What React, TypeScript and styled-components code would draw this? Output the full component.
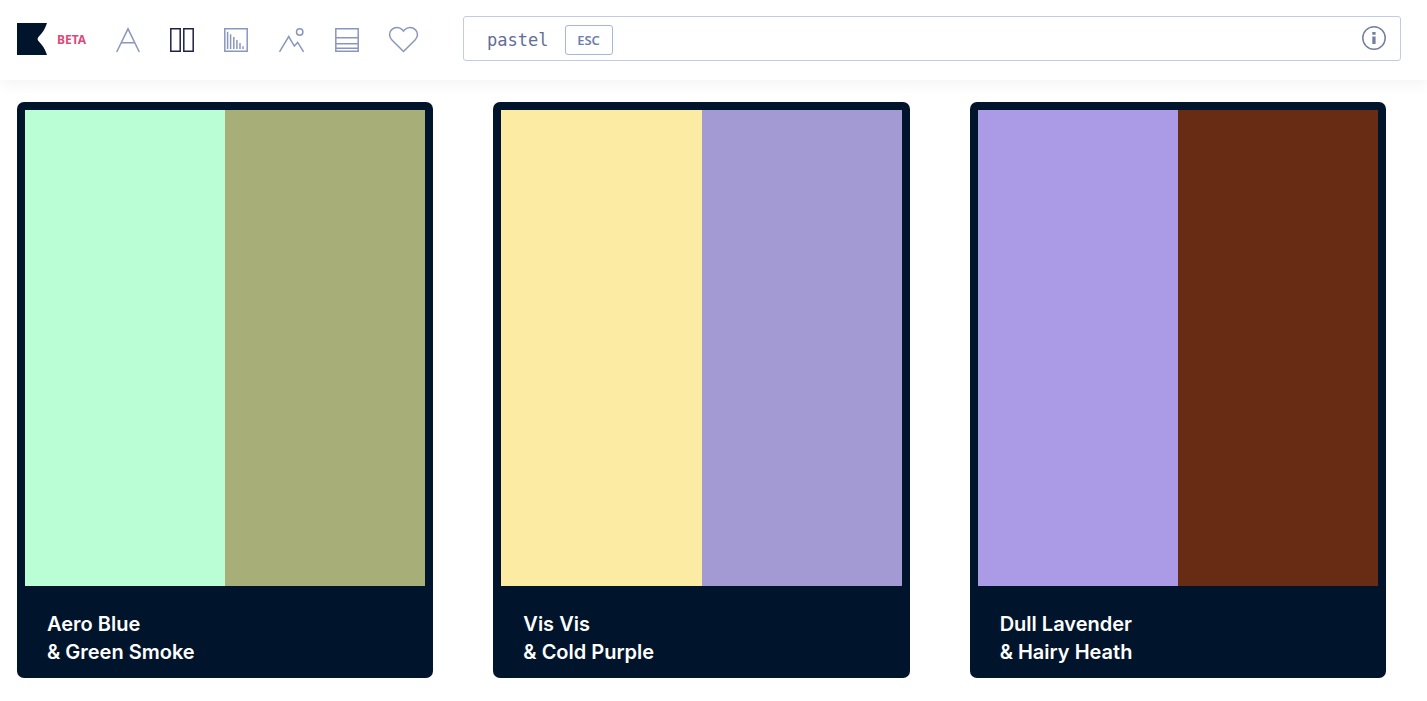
import React from "react";
import styled, { createGlobalStyle } from "styled-components";

const navy = "#00142b";
const slate = "#8a97bd";

const GlobalStyle = createGlobalStyle`
  *, *::before, *::after { box-sizing: border-box; }
  body {
    margin: 0;
    background: #fff;
    font-family: Inter, "Liberation Sans", sans-serif;
  }
`;

const Header = styled.header`
  position: sticky;
  top: 0;
  z-index: 1;
  display: flex;
  align-items: flex-start;
  gap: 44px;
  padding: 16px 26px 16px 17px;
  background: #fff;
  box-shadow: 0 4px 14px rgba(0, 0, 0, 0.05);
`;

const Brand = styled.a`
  display: flex;
  align-items: center;
  gap: 10px;
  color: #d94b7a;
  font: 700 12px/16px "Noto Sans", sans-serif;
  text-decoration: none;

  svg {
    display: block;
    margin-bottom: 2px;
  }
`;

const Nav = styled.nav`
  display: flex;
  align-items: center;
  gap: 30px;
  height: 48px;
`;

const NavButton = styled.button<{ $active?: boolean }>`
  display: flex;
  padding: 0;
  border: 0;
  background: none;
  color: ${(p) => (p.$active ? "#1d2342" : slate)};
  cursor: pointer;

  svg {
    display: block;
    fill: none;
    stroke: currentColor;
    stroke-width: 1.5;
  }
`;

const Search = styled.form`
  flex: 1;
  display: flex;
  align-items: center;
  height: 45px;
  padding: 3px 14px 0 23px;
  border: 1px solid #c3cbe2;
  border-radius: 3px;
`;

const Query = styled.input`
  field-sizing: content;
  min-width: 60px;
  margin-right: 16px;
  padding: 0;
  border: 0;
  outline: 0;
  background: none;
  color: #626d98;
  font: 17px/24px "DejaVu Sans Mono", monospace;
`;

const EscButton = styled.button`
  width: 48px;
  height: 30px;
  padding: 0;
  border: 1px solid #a5b6d8;
  border-radius: 3px;
  background: #fff;
  color: #6c80b0;
  font: 600 13px/16px "Noto Sans", sans-serif;
  cursor: pointer;
`;

const InfoButton = styled.button`
  display: flex;
  margin-left: auto;
  padding: 0 0 4px;
  border: 0;
  background: none;
  color: #75809f;
  cursor: pointer;
`;

const Grid = styled.main`
  display: grid;
  grid-template-columns: repeat(3, minmax(0, 1fr));
  gap: 60px;
  padding: 22px 41px 23px 17px;
`;

const Card = styled.a`
  display: block;
  padding: 8px 8px 12px;
  border-radius: 7px;
  background: ${navy};
  color: #fff;
  text-decoration: none;
`;

const Swatches = styled.div`
  display: flex;
  height: 476px;
`;

const Swatch = styled.div<{ $color: string }>`
  flex: 1;
  background: ${(p) => p.$color};
`;

const Title = styled.h2`
  margin: 0;
  padding: 24px 22px 0;
  font-size: 20px;
  font-weight: 600;
  line-height: 28px;
`;

const Line = styled.span`
  display: block;
`;

const pairs = [
  { names: ["Aero Blue", "Green Smoke"], colors: ["#b9fed5", "#a8ae77"] },
  { names: ["Vis Vis", "Cold Purple"], colors: ["#fceba2", "#a39ad3"] },
  { names: ["Dull Lavender", "Hairy Heath"], colors: ["#ab9be6", "#682b14"] },
];

const modes = [
  {
    label: "Type",
    width: 24,
    art: <path d="M.7 24 12 .8 23.3 24M5.3 14.8h13.4" />,
  },
  {
    label: "Poster",
    width: 24,
    active: true,
    art: <path d="M.8.8h9.4v22.4H.8zM13.8.8h9.4v22.4h-9.4z" />,
  },
  {
    label: "Gradient",
    width: 24,
    art: (
      <>
        <path d="M.8.8h22.4v22.4H.8z" />
        <path d="M3.6 3.8V21M6.6 6.2V21M9.8 9V21M12.9 12V21M16 15V21M19 18.2V21" />
      </>
    ),
  },
  {
    label: "Image",
    width: 27,
    art: (
      <>
        <path d="M1.5 23.8 10.7 8.5 16.3 18.1 19.7 14.4 25.6 23.8" />
        <circle cx="21.7" cy="4" r="3.2" />
      </>
    ),
  },
  {
    label: "Palette",
    width: 24,
    art: <path d="M.8.8h22.4v22.4H.8zM.8 9.8h22.4M.8 15.7h22.4M.8 20.2h22.4" />,
  },
  {
    label: "Favorites",
    width: 30,
    art: (
      <path d="M14.5 23.5 2.7 11.7C-.5 8.5.2 3.9 2.7 1.6 5.9-1.4 10.5-1.2 13.3 1.8L14.5 3.1 15.7 1.8C18.5-1.2 23.1-1.4 26.3 1.6 28.8 3.9 29.5 8.5 26.3 11.7Z" />
    ),
  },
];

export default function App() {
  return (
    <>
      <GlobalStyle />
      <Header>
        <Nav aria-label="Views">
          <Brand href="#" aria-label="Home, beta">
            <svg width="30" height="32" viewBox="0 0 30 32" aria-hidden="true">
              <path
                fill={navy}
                d="M0 0H30C28.6 4.5 27 7.5 24.5 10.5L21.2 14.2Q19.8 16 21.2 17.8L24.5 21.5C27 24.5 28.6 27.5 30 32H0Z"
              />
            </svg>
            BETA
          </Brand>
          {modes.map((m) => (
            <NavButton
              key={m.label}
              type="button"
              aria-label={m.label}
              aria-pressed={!!m.active}
              $active={m.active}
            >
              <svg
                width={m.width}
                height="24"
                viewBox={`0 0 ${m.width} 24`}
                overflow="visible"
                aria-hidden="true"
              >
                {m.art}
              </svg>
            </NavButton>
          ))}
        </Nav>
        <Search role="search" onSubmit={(e) => e.preventDefault()}>
          <Query type="text" aria-label="Search colors" defaultValue="pastel" />
          <EscButton type="reset">ESC</EscButton>
          <InfoButton type="button" aria-label="Information">
            <svg width="24" height="24" viewBox="0 0 24 24" aria-hidden="true">
              <circle
                cx="12"
                cy="12"
                r="11.2"
                fill="none"
                stroke="currentColor"
                strokeWidth="1.5"
              />
              <path
                fill="currentColor"
                d="M10.3 6h3.3v2.8h-3.3zM10.3 10.4h3.3v7.6h-3.3z"
              />
            </svg>
          </InfoButton>
        </Search>
      </Header>
      <Grid>
        {pairs.map(({ names, colors }) => (
          <Card key={names[0]} href="#">
            <Swatches>
              {colors.map((c) => (
                <Swatch key={c} $color={c} />
              ))}
            </Swatches>
            <Title>
              <Line>{names[0]}</Line>
              <Line>&amp; {names[1]}</Line>
            </Title>
          </Card>
        ))}
      </Grid>
    </>
  );
}
